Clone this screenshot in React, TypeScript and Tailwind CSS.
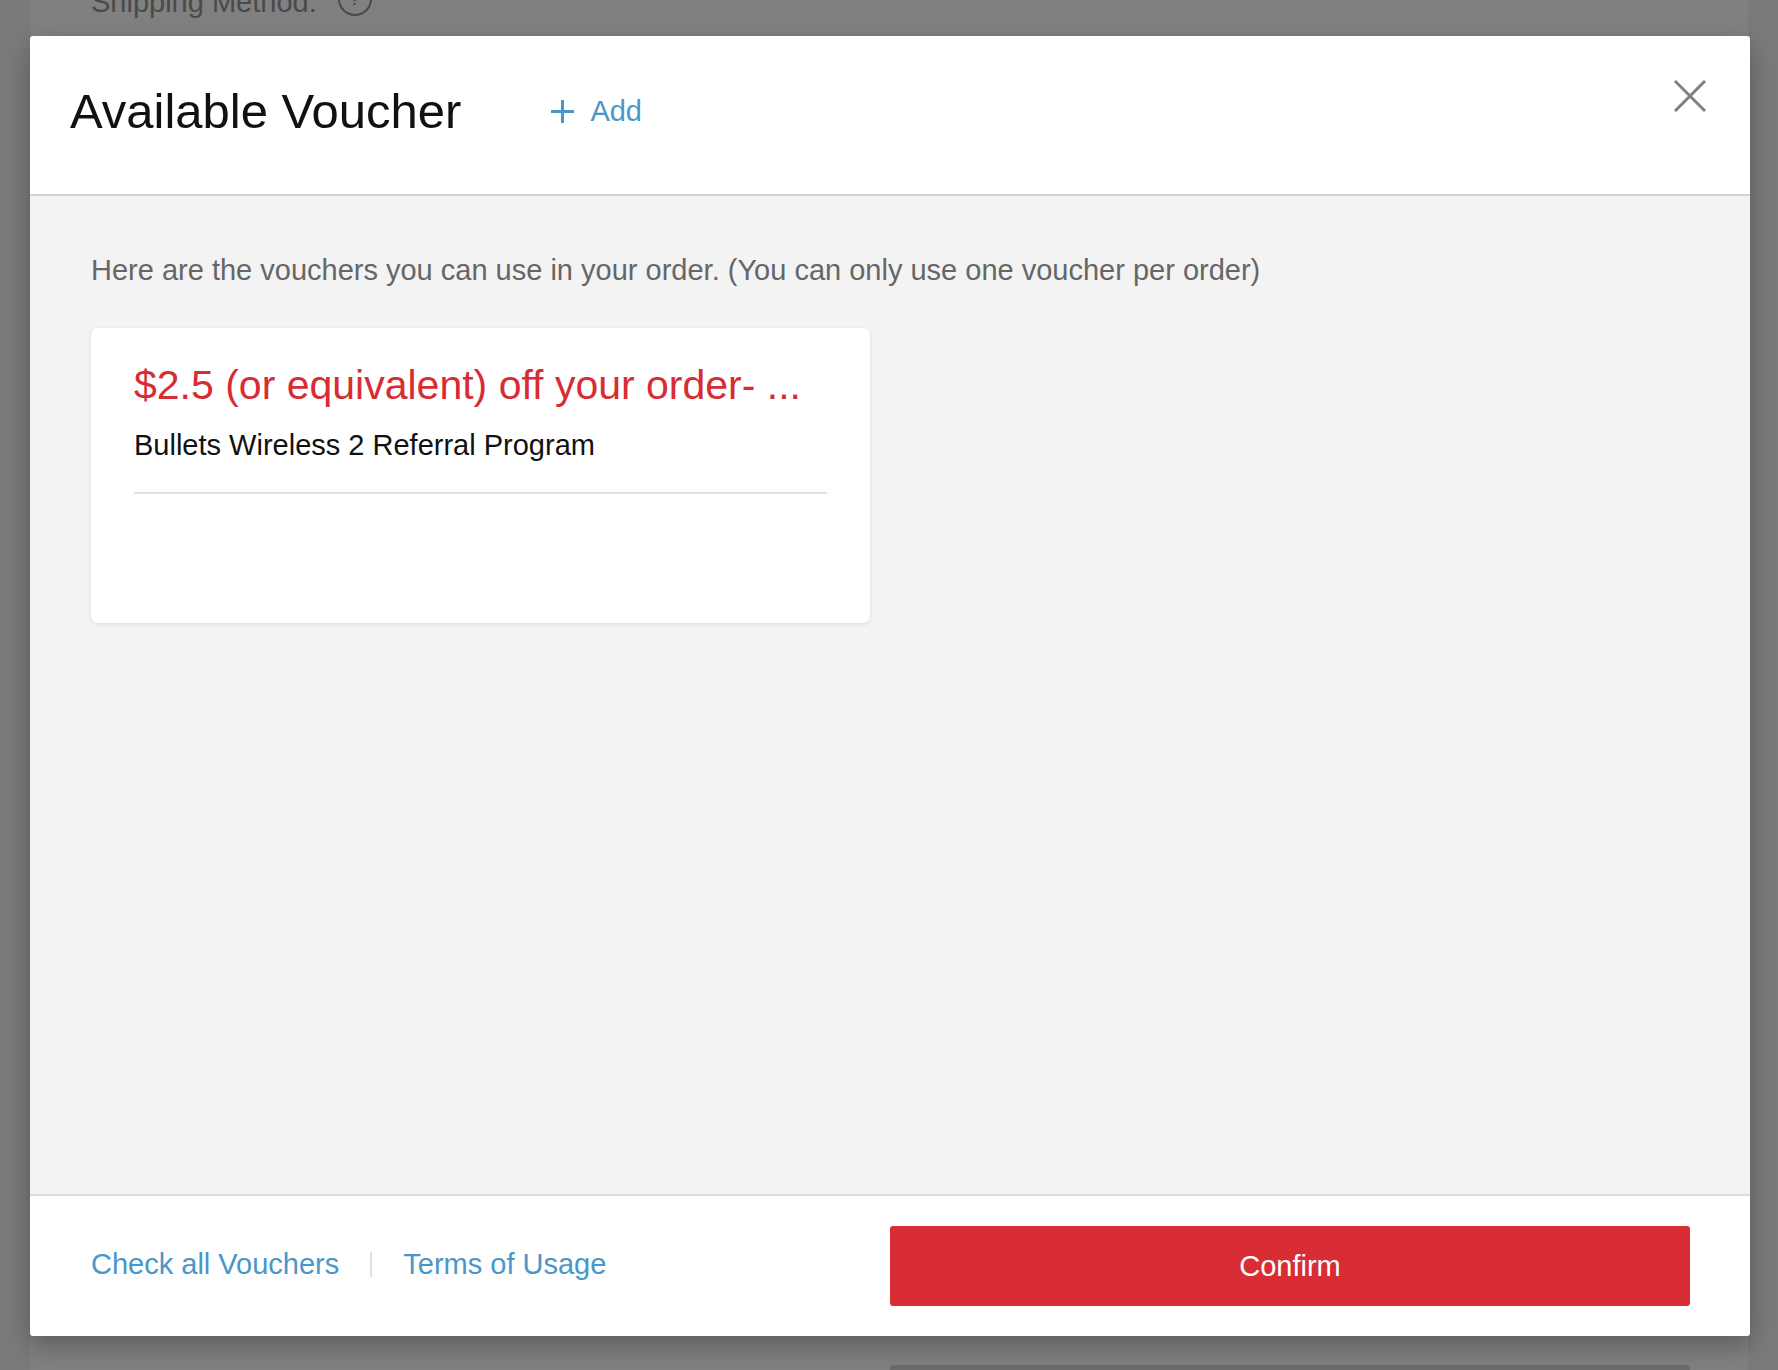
import React from 'react';

const CloseIcon: React.FC = () => (
  <svg width="32" height="32" viewBox="0 0 32 32" fill="none">
    <path d="M2 2L30 30M30 2L2 30" stroke="#808080" strokeWidth="3" strokeLinecap="square" />
  </svg>
);

const PlusIcon: React.FC = () => (
  <svg width="25" height="25" viewBox="0 0 25 25" fill="none">
    <path d="M12.5 1V24M1 12.5H24" stroke="#4a96c9" strokeWidth="3" />
  </svg>
);

const App: React.FC = () => {
  return (
    <div className="relative w-full h-[1370px] overflow-hidden bg-[#7a7a7a] font-['Liberation_Sans',Arial,sans-serif]">
      {/* page behind the overlay */}
      <div className="mx-[30px] h-full bg-[#808080] flex flex-col">
        <div className="flex items-center pl-[61px] -mt-[12px] text-[29px] leading-[29px] text-[#4a4a4a]">
          <span>Shipping Method:</span>
          <span className="ml-[21px] mt-[-8px] w-[34px] h-[34px] rounded-full border-2 border-[#4a4a4a] flex items-center justify-center text-[20px]">
            ?
          </span>
        </div>
        <div className="mt-auto ml-[860px] w-[800px] h-[5px] rounded-t-[4px] bg-[#6b6b6b]"></div>
      </div>

      {/* Voucher dialog */}
      <div className="absolute left-[30px] top-[36px] w-[1720px] h-[1300px] bg-white rounded-[3px] flex flex-col shadow-[0_10px_26px_rgba(0,0,0,0.28)]">
        <div className="relative h-[160px] shrink-0 flex items-center pl-[40px] pb-[8px] border-b-2 border-[#d2d2d2]">
          <h2 className="text-[49px] leading-none text-[#111] font-normal">Available Voucher</h2>
          <button className="ml-[89px] flex items-center gap-[15px] text-[29px] leading-none text-[#4a96c9]">
            <PlusIcon />
            <span>Add</span>
          </button>
          <button className="absolute right-[44px] top-[44px]">
            <CloseIcon />
          </button>
        </div>

        <div className="flex-1 bg-[#f3f3f3] px-[61px] pt-[57px]">
          <p className="text-[29px] leading-[1.2] text-[#666]">
            Here are the vouchers you can use in your order. (You can only use one voucher per order)
          </p>
          <div className="mt-[40px] w-[779px] h-[295px] bg-white rounded-[7px] shadow-[0_1px_4px_rgba(0,0,0,0.1)] px-[43px] pt-[33px]">
            <div className="text-[41px] leading-[1.2] text-[#d82c34] whitespace-nowrap">
              $2.5 (or equivalent) off your order- ...
            </div>
            <div className="mt-[18px] text-[29px] leading-[1.2] text-[#111]">
              Bullets Wireless 2 Referral Program
            </div>
            <div className="mt-[29px] h-[2px] bg-[#e2e2e2]"></div>
          </div>
        </div>

        <div className="h-[142px] shrink-0 border-t-2 border-[#dcdcdc] flex items-center justify-between pl-[61px] pr-[60px]">
          <div className="flex items-center text-[29px] leading-none text-[#4a96c9] -mt-[4px]">
            <span>Check all Vouchers</span>
            <span className="mx-[31px] w-[2px] h-[25px] bg-[#e0e0e0]"></span>
            <span>Terms of Usage</span>
          </div>
          <button className="w-[800px] h-[80px] rounded-[3px] bg-[#d92d35] text-white text-[29px] leading-none">
            Confirm
          </button>
        </div>
      </div>
    </div>
  );
};

export default App;
